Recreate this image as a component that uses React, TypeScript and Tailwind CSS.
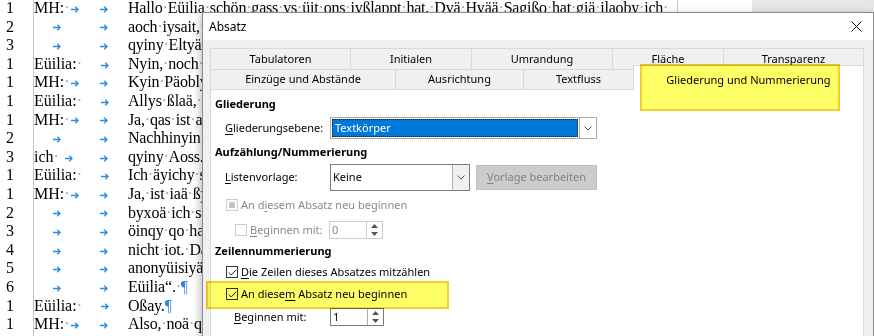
import React from "react";

interface Line {
  n: number;
  who?: string;
  text: string;
}

const lines: Line[] = [
  { n: 1, who: "MH:·", text: "Hallo·Eüilia·schön·gass·vs·üit·ons·iyßlappt·hat.·Dvä·Hyää·Sagißo·hat·giä·ilaoby·ich·" },
  { n: 2, text: "aoch·iysait,·dass·qir·ons·hyuty·tryffyn" },
  { n: 3, text: "qyiny·Eltyän·sinq·auch·qa." },
  { n: 1, who: "Eüilia:·", text: "Nyin,·noch·nicht." },
  { n: 1, who: "MH:·", text: "Kyin·Päoblyü,·qas·ist·gut." },
  { n: 1, who: "Eüilia:·", text: "Allys·ßlaä,·qanky." },
  { n: 1, who: "MH:·", text: "Ja,·qas·ist·also·so." },
  { n: 2, text: "Nachhinyin·ist·qas·anqyäs." },
  { n: 3, who: "ich·", text: "qyiny·Aoss.·Gut." },
  { n: 1, who: "Eüilia:·", text: "Ich·äyichy·sie·qiä." },
  { n: 1, who: "MH:·", text: "Ja,·ist·iaä·ßyin·Thyüa." },
  { n: 2, text: "byxoä·ich·sagy,·qas" },
  { n: 3, text: "öinqy·qo·haby·ich·qas" },
  { n: 4, text: "nicht·iot.·Das·ist·gut" },
  { n: 5, text: "anonyüisiyät·ons·qyä" },
  { n: 6, text: "Eüilia“.·¶" },
  { n: 1, who: "Eüilia:·", text: "Oßay.¶" },
  { n: 1, who: "MH:·", text: "Also,·noä·qas·ist·gut." },
  { n: 2, text: "aoä·kyin·Thyüa." },
];

function Marks({ text }: { text: string }) {
  const parts = text.split(/([·¶])/);
  return (
    <>
      {parts.map((p, i) =>
        p === "·" ? (
          <span key={i} className="text-[#7fb0e0]">
            ·
          </span>
        ) : p === "¶" ? (
          <span key={i} className="text-[#2f86d8]">
            ¶
          </span>
        ) : (
          <React.Fragment key={i}>{p}</React.Fragment>
        )
      )}
    </>
  );
}

function TabMark() {
  return (
    <svg width="8" height="7" viewBox="0 0 8 7" className="mt-[2px] text-[#2a8ae0]">
      <path d="M0 3.5H7M4.3 0.8L7 3.5L4.3 6.2" stroke="currentColor" strokeWidth="1.3" fill="none" />
    </svg>
  );
}

function DocRow({ line }: { line: Line }) {
  const long = line.who === "Eüilia:·";
  return (
    <div className="flex h-[18.6px] items-center whitespace-nowrap leading-[18.6px]">
      <span className="w-[34px] shrink-0 border-r border-[#c8c8c8] pl-[6px]">{line.n}</span>
      {long ? (
        <span className="flex w-[94px] shrink-0 items-center">
          <Marks text={line.who!} />
          <span className="flex flex-1 justify-center">
            <TabMark />
          </span>
        </span>
      ) : (
        <>
          <span className="flex w-[46px] shrink-0 items-center">
            {line.who && <Marks text={line.who} />}
            <span className="flex flex-1 justify-center">
              <TabMark />
            </span>
          </span>
          <span className="flex w-[48px] shrink-0 justify-center">
            <TabMark />
          </span>
        </>
      )}
      <span className="tracking-[-0.2px]">
        <Marks text={line.text} />
      </span>
    </div>
  );
}

function Chevron({ color = "#555" }: { color?: string }) {
  return (
    <svg width="8" height="5" viewBox="0 0 8 5">
      <path d="M0.5 0.5L4 4L7.5 0.5" stroke={color} strokeWidth="1" fill="none" />
    </svg>
  );
}

function CheckBox({ state }: { state: "checked" | "off" | "mixed" }) {
  if (state === "checked") {
    return (
      <span className="flex h-[12px] w-[12px] shrink-0 items-center justify-center border border-[#333] bg-white">
        <svg width="9" height="7" viewBox="0 0 9 7">
          <path d="M0.8 3.6L3.2 6L8.2 0.8" stroke="#222" strokeWidth="1" fill="none" />
        </svg>
      </span>
    );
  }
  if (state === "mixed") {
    return (
      <span className="flex h-[12px] w-[12px] shrink-0 items-center justify-center border border-[#cccccc] bg-white">
        <span className="h-[6px] w-[6px] bg-[#c4c4c4]" />
      </span>
    );
  }
  return <span className="h-[12px] w-[12px] shrink-0 border border-[#cccccc] bg-white" />;
}

function Spin({ value, disabled }: { value: string; disabled?: boolean }) {
  return (
    <div
      className={`flex h-[18px] w-[54px] border bg-white ${
        disabled ? "border-[#cccccc] text-[#8a8a8a]" : "border-[#7a7a7a] text-black"
      }`}
    >
      <span className="flex-1 pl-[2px] leading-[16px]">{value}</span>
      <div className={`flex w-[16px] flex-col border-l ${disabled ? "border-[#cccccc]" : "border-[#adadad]"}`}>
        <div className="flex flex-1 items-center justify-center">
          <svg width="7" height="4" viewBox="0 0 7 4">
            <path d="M0 4L3.5 0L7 4Z" fill="#555" />
          </svg>
        </div>
        <div className="flex flex-1 items-center justify-center">
          <svg width="7" height="4" viewBox="0 0 7 4">
            <path d="M0 0L3.5 4L7 0Z" fill="#555" />
          </svg>
        </div>
      </div>
    </div>
  );
}

export default function App() {
  return (
    <div className="relative h-[336px] w-[874px] overflow-hidden bg-white">
      {/* document behind the dialog */}
      <div className="flex h-full font-['Liberation_Serif',serif] text-[16px] text-black">
        <div className="w-[752px] shrink-0 bg-white">
          <div className="-mt-px w-[678px] overflow-hidden border-r border-[#c8c8c8]">
            {lines.map((l, i) => (
              <DocRow key={i} line={l} />
            ))}
          </div>
        </div>
        <div className="flex-1 bg-[#e6e6e6]" />
      </div>

      {/* dialog window */}
      <div className="absolute left-[202px] top-[12px] h-[330px] w-[672px] whitespace-nowrap border border-[#8c8c8c] bg-[#f0f0f0] font-['Segoe_UI','Noto_Sans',sans-serif] text-[11px] text-black shadow-[-2px_2px_8px_rgba(0,0,0,0.25)]">
        <div className="flex h-[27px] items-center justify-between bg-white pl-[6px] pr-[11px] text-[12px]">
          <span>Absatz</span>
          <svg width="11" height="11" viewBox="0 0 11 11">
            <path d="M0.5 0.5L10.5 10.5M10.5 0.5L0.5 10.5" stroke="#111" strokeWidth="1" />
          </svg>
        </div>

        <div className="pl-[7px] pr-[9px] pt-[8px]">
          <div className="flex h-[21px]">
            {[
              ["Tabulatoren", "w-[140px]"],
              ["Initialen", "w-[121px]"],
              ["Umrandung", "w-[141px]"],
              ["Fläche", "w-[111px]"],
              ["Transparenz", "flex-1 border-r"],
            ].map(([label, cls]) => (
              <div
                key={label}
                className={`flex items-center justify-center border-l border-t border-[#d9d9d9] bg-[#f0f0f0] ${cls}`}
              >
                {label}
              </div>
            ))}
          </div>
          <div className="flex h-[20px] items-end">
            {[
              ["Einzüge und Abstände", "w-[185px]"],
              ["Ausrichtung", "w-[128px]"],
              ["Textfluss", "w-[110px]"],
            ].map(([label, cls]) => (
              <div
                key={label}
                className={`flex h-[20px] items-center justify-center border-l border-t border-[#d9d9d9] bg-[#f0f0f0] ${cls}`}
              >
                {label}
              </div>
            ))}
            <div className="relative z-10 -mb-px flex h-[25px] flex-1 items-center justify-center border-x border-t border-[#d9d9d9] bg-white pt-[4px]">
              Gliederung und Nummerierung
            </div>
          </div>

          <div className="h-[260px] border border-[#d9d9d9] bg-white">
            <div className="mt-[6px] h-[16px] pl-[4px] font-bold leading-[16px]">Gliederung</div>
            <div className="mt-[5px] flex h-[22px] items-center pl-[14px]">
              <span className="w-[105px]">
                <u className="underline-offset-2">G</u>liederungsebene:
              </span>
              <div className="flex h-[22px] w-[267px] border border-[#adadad] bg-white">
                <div className="m-px flex flex-1 items-center border border-dotted border-[#222] bg-[#0078d7] pl-[2px] text-white">
                  Textkörper
                </div>
                <div className="flex w-[17px] items-center justify-center border-l border-[#adadad] bg-white">
                  <Chevron />
                </div>
              </div>
            </div>

            <div className="mt-[5px] h-[16px] pl-[4px] font-bold leading-[16px]">Aufzählung/Nummerierung</div>
            <div className="mt-[4px] flex h-[27px] items-center pl-[14px]">
              <span className="w-[105px]">
                <u className="underline-offset-2">L</u>istenvorlage:
              </span>
              <div className="flex h-[27px] w-[140px] border border-[#7a7a7a] bg-white">
                <div className="flex flex-1 items-center pl-[2px]">Keine</div>
                <div className="flex w-[17px] items-center justify-center border-l border-[#adadad] bg-[#f0f0f0]">
                  <Chevron />
                </div>
              </div>
              <div className="ml-[6px] flex h-[25px] w-[121px] items-center justify-center border border-[#bfbfbf] bg-[#cccccc] text-[#838383]">
                <span>
                  <u className="underline-offset-2">V</u>orlage bearbeiten
                </span>
              </div>
            </div>

            <div className="mt-[6px] flex h-[16px] items-center gap-[3px] pl-[15px] text-[#8a8a8a]">
              <CheckBox state="mixed" />
              <span>
                An d<u className="underline-offset-2">i</u>esem Absatz neu beginnen
              </span>
            </div>
            <div className="mt-[8px] flex h-[18px] items-center pl-[24px] text-[#8a8a8a]">
              <CheckBox state="off" />
              <span className="ml-[3px] w-[79px]">
                <u className="underline-offset-2">B</u>eginnen mit:
              </span>
              <Spin value="0" disabled />
            </div>

            <div className="mt-[4px] h-[16px] pl-[4px] font-bold leading-[16px]">Zeilennummerierung</div>
            <div className="mt-[5px] flex h-[16px] items-center gap-[3px] pl-[15px]">
              <CheckBox state="checked" />
              <span>
                <u className="underline-offset-2">D</u>ie Zeilen dieses Absatzes mitzählen
              </span>
            </div>
            <div className="mt-[6px] flex h-[16px] items-center gap-[3px] pl-[15px]">
              <CheckBox state="checked" />
              <span>
                An diese<u className="underline-offset-2">m</u> Absatz neu beginnen
              </span>
            </div>
            <div className="mt-[6px] flex h-[18px] items-center pl-[23px]">
              <span className="w-[96px]">
                <u className="underline-offset-2">B</u>eginnen mit:
              </span>
              <Spin value="1" />
            </div>
          </div>
        </div>

        {/* yellow highlight marks */}
        <div className="absolute left-[437px] top-[51px] z-20 h-[47px] w-[200px] border-2 border-[#f5cf2e] bg-[#ffff66] mix-blend-multiply" />
        <div className="absolute left-[3px] top-[268px] z-20 h-[28px] w-[243px] border-2 border-[#f5cf2e] bg-[#ffff66] mix-blend-multiply" />
      </div>
    </div>
  );
}
